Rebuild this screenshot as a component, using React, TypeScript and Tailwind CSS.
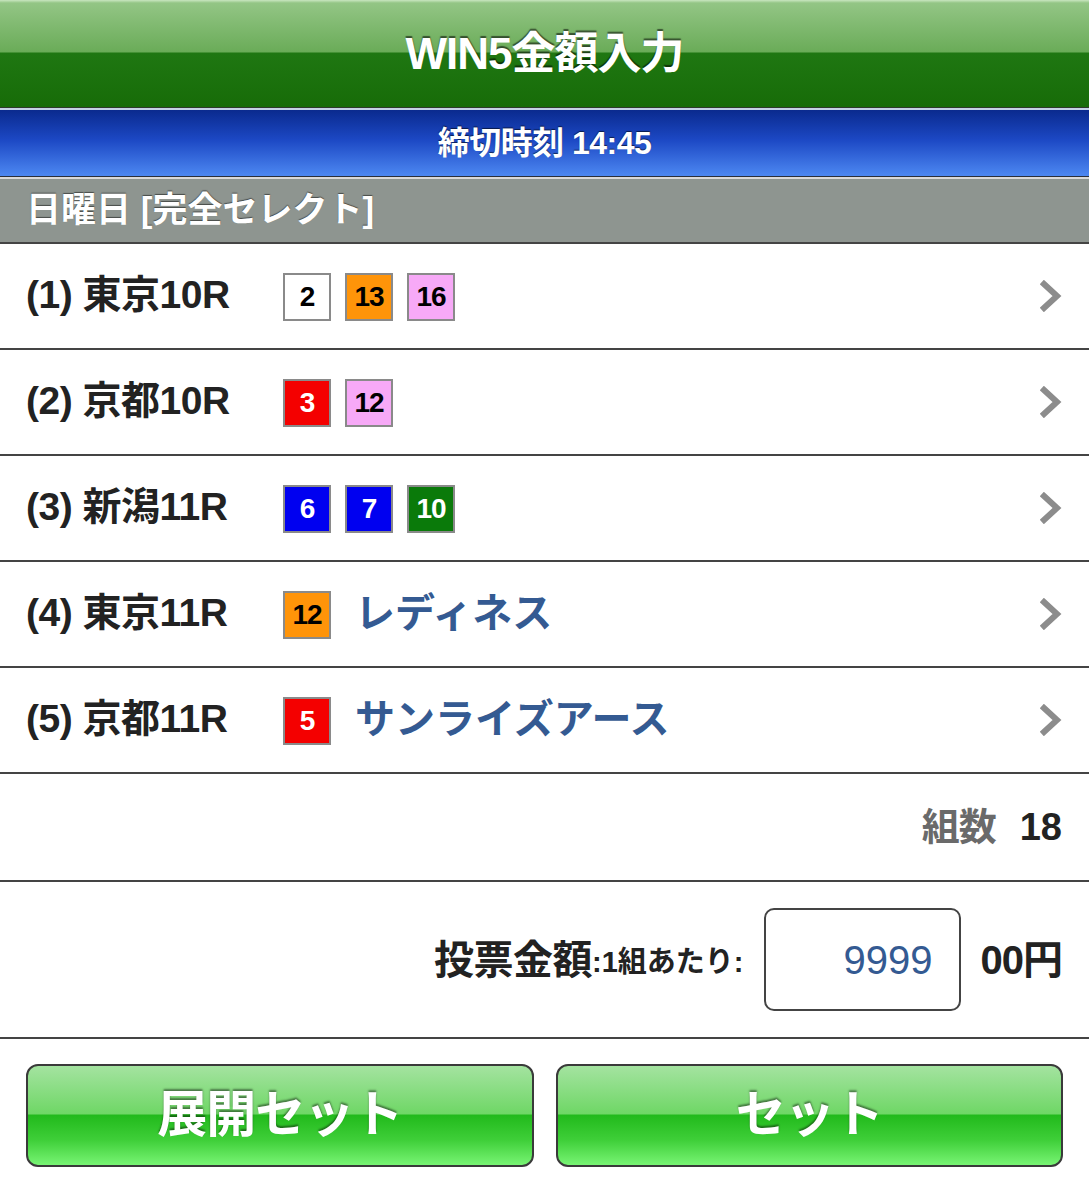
const font = "font-['Liberation_Sans','Noto_Sans_CJK_JP',sans-serif]";

type Pick = { n: string; bg: string; fg: string };

const races: { no: string; name: string; picks: Pick[]; horse?: string }[] = [
  {
    no: "(1)",
    name: "東京10R",
    picks: [
      { n: "2", bg: "bg-white", fg: "text-black" },
      { n: "13", bg: "bg-[#ff9409]", fg: "text-black" },
      { n: "16", bg: "bg-[#f7a9f7]", fg: "text-black" },
    ],
  },
  {
    no: "(2)",
    name: "京都10R",
    picks: [
      { n: "3", bg: "bg-[#f40000]", fg: "text-white" },
      { n: "12", bg: "bg-[#f7a9f7]", fg: "text-black" },
    ],
  },
  {
    no: "(3)",
    name: "新潟11R",
    picks: [
      { n: "6", bg: "bg-[#0000f0]", fg: "text-white" },
      { n: "7", bg: "bg-[#0000f0]", fg: "text-white" },
      { n: "10", bg: "bg-[#0a7a0a]", fg: "text-white" },
    ],
  },
  {
    no: "(4)",
    name: "東京11R",
    picks: [{ n: "12", bg: "bg-[#ff9409]", fg: "text-black" }],
    horse: "レディネス",
  },
  {
    no: "(5)",
    name: "京都11R",
    picks: [{ n: "5", bg: "bg-[#f40000]", fg: "text-white" }],
    horse: "サンライズアース",
  },
];

const Chevron = () => (
  <svg width="22" height="32" viewBox="0 0 22 32" fill="none">
    <polyline
      points="4,4 17,16 4,28"
      stroke="#8c8c8c"
      strokeWidth="6"
      strokeLinecap="square"
      strokeLinejoin="miter"
    />
  </svg>
);

const App = () => {
  return (
    <div className={`w-[1089px] h-[1200px] bg-white overflow-hidden ${font}`}>
      {/* title bar */}
      <div className="h-[108px] flex items-center justify-center border-b border-[#2f3a2c] bg-[linear-gradient(to_bottom,#c9e6c0_0px,#93c585_3px,#6aac58_52px,#1f7712_53px,#176c08_100%)]">
        <span className="text-white font-bold text-[44px] tracking-[-1px] [text-shadow:0_-2px_1px_rgba(0,0,0,0.55)]">
          WIN5金額入力
        </span>
      </div>
      <div className="h-[2px] bg-[#c5d2e6]" />
      <div className="h-[67px] flex items-center justify-center border-b border-[#2a2f3a] bg-[linear-gradient(to_bottom,#0a2a8e_0%,#1c48c4_45%,#4d88f2_100%)]">
        <span className="text-white font-bold text-[32px] tracking-[-0.5px] [text-shadow:0_-1px_1px_rgba(0,0,0,0.6)]">
          締切時刻 14:45
        </span>
      </div>
      <div className="h-[2px] bg-[#dadada]" />
      <div className="h-[65px] flex items-center pl-[26px] bg-[#8e9590] border-b-2 border-[#444]">
        <span className="text-white font-bold text-[35px] [text-shadow:0_-1px_1px_rgba(0,0,0,0.5)]">
          日曜日 [完全セレクト]
        </span>
      </div>

      {/* race rows */}
      {races.map((r) => (
        <div
          key={r.no}
          className="h-[106px] flex items-center pl-[26px] pr-[27px] border-b-2 border-[#444]"
        >
          <div className="w-[257px] text-[#222] font-bold text-[39px] tracking-[-0.5px] -mt-[2px]">
            {r.no} {r.name}
          </div>
          <div className="flex items-center gap-[14px] mt-[2px]">
            {r.picks.map((p) => (
              <div
                key={p.n}
                className={`w-[48px] h-[48px] border-2 border-[#8a8a8a] flex items-center justify-center font-bold text-[28px] tracking-[-1px] ${p.bg} ${p.fg}`}
              >
                {p.n}
              </div>
            ))}
          </div>
          {r.horse && (
            <div className="ml-[24px] text-[#345a92] font-bold text-[40px] -mt-[2px]">
              {r.horse}
            </div>
          )}
          <div className="ml-auto">
            <Chevron />
          </div>
        </div>
      ))}

      {/* count */}
      <div className="h-[108px] flex items-center justify-end pr-[27px] border-b-2 border-[#444]">
        <span className="text-[#6a6a6a] font-bold text-[38px] tracking-[-1px]">組数</span>
        <span className="ml-[24px] text-[#222] font-bold text-[38px]">18</span>
      </div>

      {/* amount */}
      <div className="h-[157px] flex items-center justify-end pr-[27px] border-b-2 border-[#444]">
        <span className="text-[#222] font-bold text-[40px] tracking-[-0.5px]">投票金額</span>
        <span className="text-[#222] font-bold text-[29px] mt-[6px]">:1組あたり:</span>
        <div className="ml-[20px] w-[197px] h-[103px] border-2 border-[#444] rounded-[10px] flex items-center justify-end pr-[26px]">
          <span className="text-[#345a92] text-[40px] font-['Liberation_Sans',sans-serif]">
            9999
          </span>
        </div>
        <span className="ml-[20px] text-[#222] font-bold text-[40px] tracking-[-1px]">00円</span>
      </div>

      {/* buttons */}
      <div className="grid grid-cols-2 gap-[22px] px-[26px] pt-[25px]">
        {["展開セット", "セット"].map((t) => (
          <button
            key={t}
            className="h-[103px] rounded-[12px] border-2 border-[#3a3a3a] flex items-center justify-center bg-[linear-gradient(to_bottom,#a4e3a0_0%,#6fd766_48%,#22ba1c_50%,#3fcf39_75%,#78f474_100%)]"
          >
            <span className="text-white font-bold text-[50px] tracking-[-1px] [text-shadow:0_-2px_2px_rgba(0,0,0,0.45)]">
              {t}
            </span>
          </button>
        ))}
      </div>
    </div>
  );
};

export default App;
